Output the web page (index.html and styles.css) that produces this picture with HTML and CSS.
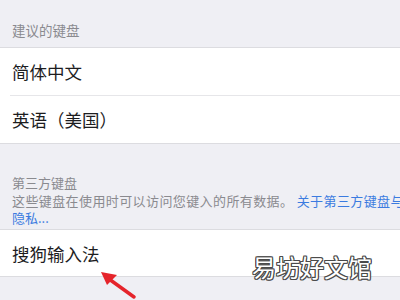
FILE: index.html
```html
<!DOCTYPE html>
<html>
	<head>
		<meta charset="utf-8">
		<title>键盘</title>
		<link rel="stylesheet" href="styles.css">
	</head>

	<body>
		<div class="section-head">建议的键盘</div>

		<div class="group">
			<div class="row">简体中文</div>
			<div class="row">英语（美国）</div>
		</div>

		<div class="section-foot">
			<div>第三方键盘</div>
			<div class="desc">这些键盘在使用时可以访问您键入的所有数据。 <span class="link">关于第三方键盘与</span></div>
			<div><span class="link">隐私...</span></div>
		</div>

		<div class="group">
			<div class="row tall">搜狗输入法</div>
		</div>

		<div class="watermark">易坊好文馆</div>

		<svg class="arrow" width="400" height="300" viewBox="0 0 400 300">
			<line x1="134" y1="297" x2="109" y2="279" stroke="#e5242b" stroke-width="3.5" stroke-linecap="round"/>
			<polygon points="101,272 117,275 107,285" fill="#e5242b"/>
		</svg>
	</body>
</html>
```

FILE: styles.css
```css
		body {
			margin: 0;
			width: 400px;
			height: 300px;
			overflow: hidden;
			position: relative;
			background-color: #efeff4;
			font-family: "Noto Sans CJK SC", "Noto Sans", sans-serif;
			color: #1d1d1f;
		}

		.section-head {
			height: 47px;
			box-sizing: border-box;
			padding: 0 12px 8px 12px;
			display: flex;
			align-items: flex-end;
			font-size: 13.5px;
			line-height: 18px;
			color: #8a8a8f;
		}

		.group {
			background-color: #ffffff;
			border-top: 1px solid #dcdce0;
			border-bottom: 1px solid #dcdce0;
		}

		.row {
			height: 47px;
			display: flex;
			align-items: center;
			padding-left: 12px;
			font-size: 17.5px;
			position: relative;
		}

		.row + .row {
			border-top: 1px solid #e6e6e9;
			margin-left: 10px;
			padding-left: 2px;
		}

		.row.tall {
			height: 46px;
		}

		.section-foot {
			height: 85px;
			box-sizing: border-box;
			padding: 30px 0 0 12px;
			font-size: 13px;
			line-height: 17.5px;
			color: #8a8a8f;
		}

		.desc {
			white-space: nowrap;
			letter-spacing: 0.4px;
		}

		.link {
			color: #3b7be0;
		}

		.watermark {
			position: absolute;
			left: 252px;
			top: 252px;
			font-size: 24px;
			line-height: 30px;
			color: #ffffff;
			text-shadow: 1px 0 0 #4a4a4a, -1px 0 0 #4a4a4a, 0 1px 0 #4a4a4a, 0 -1px 0 #4a4a4a,
				1px 1px 0 #4a4a4a, -1px -1px 0 #4a4a4a, 1px -1px 0 #4a4a4a, -1px 1px 0 #4a4a4a;
		}

		.arrow {
			position: absolute;
			left: 0;
			top: 0;
		}
```
